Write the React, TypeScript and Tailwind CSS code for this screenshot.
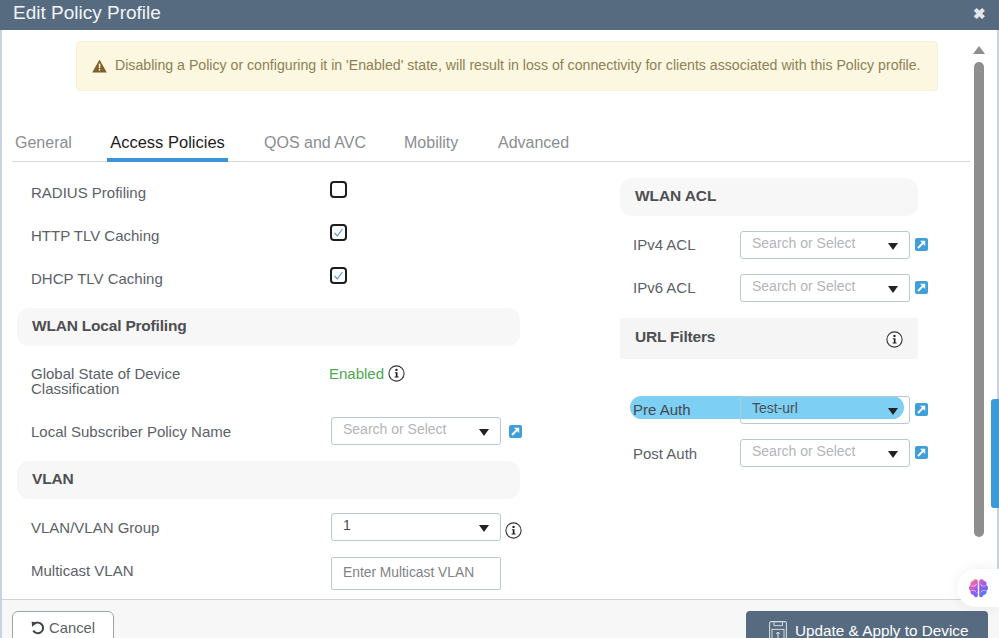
import React from "react";

const font = { fontFamily: '"Liberation Sans", Arial, sans-serif' };

function LinkIcon() {
  return (
    <svg width="13" height="13" viewBox="0 0 13 13" className="shrink-0">
      <rect width="13" height="13" rx="2" fill="#3f9fd8" />
      <path d="M3 10 L8.6 4.4" stroke="#fff" strokeWidth="2" />
      <path d="M5 2.8 H10.2 V8 Z" fill="#fff" />
    </svg>
  );
}

function InfoIcon() {
  return (
    <svg width="17" height="17" viewBox="0 0 17 17" className="shrink-0">
      <circle cx="8.5" cy="8.5" r="7.6" fill="#fff" stroke="#333" strokeWidth="1.1" />
      <circle cx="8.5" cy="4.9" r="1.2" fill="#222" />
      <path d="M6.9 7.2 H9.5 V11.6 H10.6 V12.6 H6.6 V11.6 H7.8 V8.2 H6.9 Z" fill="#222" />
    </svg>
  );
}

function Select({ value, clear }: { value?: string; clear?: boolean }) {
  return (
    <div
      className={`relative z-10 w-[170px] h-[28px] shrink-0 rounded-[3px] border border-[#b7c8d1] flex pl-[11px] pt-[1px] text-[14px] leading-[20px] ${
        clear ? "" : "bg-white"
      } ${value ? "text-[#4a4f54]" : "text-[#b3b5b7]"}`}
    >
      <span>{value ?? "Search or Select"}</span>
      <div className="ml-auto w-[31px] mr-[1px] flex justify-center pt-[10px]">
        <div className="w-0 h-0 border-l-[5px] border-r-[5px] border-t-[7px] border-l-transparent border-r-transparent border-t-[#222]" />
      </div>
    </div>
  );
}

function Check({ on }: { on?: boolean }) {
  return (
    <div className="w-[17px] h-[17px] rounded-[4px] border-2 border-[#1d1d1d] bg-white flex items-center justify-center">
      {on && (
        <svg width="11" height="11" viewBox="0 0 11 11">
          <path d="M1.5 6 L4.3 8.8 L9.5 2" fill="none" stroke="#4a9fd6" strokeWidth="1.2" />
        </svg>
      )}
    </div>
  );
}

function CheckRow({ label, on }: { label: string; on?: boolean }) {
  return (
    <div className="h-[43px] flex items-start pl-[14px] text-[15px] text-[#5b6167]">
      <span className="w-[299px] pt-[2px] leading-[20px]">{label}</span>
      <Check on={on} />
    </div>
  );
}

function Section({ title }: { title: string }) {
  return (
    <div className="h-[38px] rounded-[12px] bg-[#f7f7f7] pl-[15px] pb-[3px] flex items-center text-[15.5px] font-bold text-[#4d4f52] tracking-[-0.2px]">
      {title}
    </div>
  );
}

function BrainIcon() {
  return (
    <svg width="21" height="21" viewBox="0 0 21 21">
      <defs>
        <linearGradient id="brainGrad" x1="0" y1="0" x2="0.8" y2="1">
          <stop offset="0" stopColor="#f59a3c" />
          <stop offset="0.3" stopColor="#e05fc0" />
          <stop offset="0.6" stopColor="#8a5cf0" />
          <stop offset="1" stopColor="#4f7df0" />
        </linearGradient>
      </defs>
      <path
        d="M9.8 2.4 C8.6 .6 5.6 .9 5 3 C2.8 3 1.8 5.4 2.8 7 C.4 8.2 .4 11.6 2.6 12.8 C1.8 15 3.6 17 5.4 16.8 C6 19.6 9 20 9.8 18 Z M11.2 2.4 C12.4 .6 15.4 .9 16 3 C18.2 3 19.2 5.4 18.2 7 C20.6 8.2 20.6 11.6 18.4 12.8 C19.2 15 17.4 17 15.6 16.8 C15 19.6 12 20 11.2 18 Z"
        fill="url(#brainGrad)"
      />
      <path
        d="M3.5 8 H7 L8.4 6 M3.5 12.5 H6.6 L8.4 14.5 M17.5 8 H14 L12.6 6 M17.5 12.5 H14.4 L12.6 14.5"
        fill="none"
        stroke="#fff"
        strokeOpacity="0.7"
        strokeWidth="0.8"
      />
    </svg>
  );
}

export default function App() {
  return (
    <div style={font} className="relative w-[999px] h-[638px] overflow-hidden bg-white flex flex-col">
      <header className="h-[30px] shrink-0 bg-[#566b80] flex items-center justify-between pl-[13px] pr-[13px] pb-[4px] text-white">
        <span className="text-[19px] leading-[26px] text-[#f2f4f6]">Edit Policy Profile</span>
        <span className="text-[15px] font-bold text-[#e3e7ea] leading-none">✖</span>
      </header>

      <main className="h-[569px] shrink-0 flex border-l-2 border-r-2 border-[#c7d3df] overflow-hidden">
        <div className="w-[970px] shrink-0 flex flex-col">
          <div className="ml-[74px] mt-[11px] w-[862px] h-[50px] shrink-0 rounded-[4px] border border-[#f5f0d8] bg-[#fbf7e1] flex items-center pl-[15px] text-[14.15px] whitespace-nowrap text-[#8f7f55]">
            <svg width="15" height="14" viewBox="0 0 15 14" className="mr-[8px] shrink-0">
              <path d="M7.5 .5 L14.8 13.5 H.2 Z" fill="#7d6128" />
              <rect x="6.8" y="4.6" width="1.5" height="4.6" fill="#fbf7e1" />
              <rect x="6.8" y="10" width="1.5" height="1.6" fill="#fbf7e1" />
            </svg>
            Disabling a Policy or configuring it in 'Enabled' state, will result in loss of connectivity for clients associated with this Policy profile.
          </div>

          <nav className="ml-[10px] mt-[31px] h-[40px] shrink-0 w-[958px] border-b border-[#d5d8da] flex text-[16px] text-[#8a8e92] relative">
            <span className="ml-[3px] w-[92px] pt-[9px] leading-[24px]">General</span>
            <span className="w-[121px] h-[40px] pt-[8px] leading-[24px] text-center text-[16.5px] text-[#1c1c1c] border-b-[4px] border-[#3c94d6]">
              Access Policies
            </span>
            <span className="ml-[36px] w-[140px] pt-[9px] leading-[24px]">QOS and AVC</span>
            <span className="w-[94px] pt-[9px] leading-[24px]">Mobility</span>
            <span className="pt-[9px] leading-[24px]">Advanced</span>
          </nav>

          <div className="flex">
            <section className="ml-[15px] w-[503px] shrink-0 pt-[19px]">
              <CheckRow label="RADIUS Profiling" />
              <CheckRow label="HTTP TLV Caching" on />
              <CheckRow label="DHCP TLV Caching" on />
              <div className="-mt-[2px]">
                <Section title="WLAN Local Profiling" />
              </div>
              <div className="mt-[20px] flex pl-[14px] text-[15px] text-[#5b6167]">
                <span className="w-[298px] leading-[15px] pr-[100px]">Global State of Device Classification</span>
                <span className="text-[#4ca84f] leading-[15px]">Enabled</span>
                <span className="ml-[4px] -mt-[1px]">
                  <InfoIcon />
                </span>
              </div>
              <div className="mt-[21px] flex items-center pl-[14px] text-[15px] text-[#5b6167]">
                <span className="w-[300px] shrink-0 pt-[2px]">Local Subscriber Policy Name</span>
                <Select />
                <span className="ml-[8px]">
                  <LinkIcon />
                </span>
              </div>
              <div className="mt-[16px]">
                <Section title="VLAN" />
              </div>
              <div className="mt-[14px] flex items-center pl-[14px] text-[15px] text-[#5b6167]">
                <span className="w-[300px] shrink-0 pt-[2px]">VLAN/VLAN Group</span>
                <Select value="1" />
                <span className="ml-[4px] mt-[6px]">
                  <InfoIcon />
                </span>
              </div>
              <div className="mt-[16px] flex items-start pl-[14px] text-[15px] text-[#5b6167]">
                <span className="w-[300px] shrink-0 leading-[20px] pt-[4px]">Multicast VLAN</span>
                <div className="w-[170px] h-[33px] border border-[#b7c8d1] rounded-[2px] pl-[11px] flex items-center text-[13.8px] text-[#7f8387]">
                  Enter Multicast VLAN
                </div>
              </div>
            </section>

            <section className="ml-[100px] w-[310px] shrink-0 pt-[16px]">
              <div className="w-[298px] h-[38px] rounded-[12px] bg-[#f7f7f7] pl-[15px] pb-[3px] flex items-center text-[15.5px] font-bold text-[#4d4f52] tracking-[-0.1px]">
                WLAN ACL
              </div>
              <div className="mt-[15px] flex items-center text-[15px] text-[#5b6167]">
                <span className="w-[120px] pl-[13px]">IPv4 ACL</span>
                <Select />
                <span className="ml-[5px] -mt-[2px]">
                  <LinkIcon />
                </span>
              </div>
              <div className="mt-[15px] flex items-center text-[15px] text-[#5b6167]">
                <span className="w-[120px] pl-[13px]">IPv6 ACL</span>
                <Select />
                <span className="ml-[5px] -mt-[2px]">
                  <LinkIcon />
                </span>
              </div>
              <div className="mt-[16px] w-[298px] h-[41px] rounded-[3px] bg-[#f5f5f5] pl-[15px] pr-[15px] flex items-center justify-between text-[15.5px] font-bold text-[#4d4f52] tracking-[-0.2px]">
                <span className="-mt-[3px]">URL Filters</span>
                <span className="mt-[1px]">
                  <InfoIcon />
                </span>
              </div>
              <div className="relative mt-[37px] flex items-center text-[15px] text-[#43494e]">
                <div className="absolute left-[10px] top-0 w-[274px] h-[23px] rounded-full bg-[#7dcff3]" />
                <span className="relative z-10 w-[120px] pl-[13px]">Pre Auth</span>
                <Select value="Test-url" clear />
                <span className="ml-[5px] -mt-[2px]">
                  <LinkIcon />
                </span>
              </div>
              <div className="mt-[15px] flex items-center text-[15px] text-[#5b6167]">
                <span className="w-[120px] pl-[13px] pt-[2px]">Post Auth</span>
                <Select />
                <span className="ml-[5px] -mt-[2px]">
                  <LinkIcon />
                </span>
              </div>
            </section>
          </div>
        </div>

        <aside className="w-[14px] shrink-0 flex flex-col items-center pt-[16px]">
          <div className="w-0 h-0 border-l-[6px] border-r-[6px] border-b-[8px] border-l-transparent border-r-transparent border-b-[#8e8e8e]" />
          <div className="mt-[8px] w-[10px] h-[475px] rounded-full bg-[#8e8e8e]" />
        </aside>
      </main>

      <footer className="h-[39px] shrink-0 bg-[#f7f7f7] border-t border-[#cfd3d6] border-l-2 border-l-[#c7d3df] pl-[10px] pr-[11px] pt-[11px] flex justify-between">
        <button className="w-[102px] h-[40px] bg-white border border-[#9aa5ad] rounded-[6px] flex items-start pl-[18px] pt-[6px] text-[14.8px] text-[#5b6167] leading-[20px]">
          <svg width="14" height="14" viewBox="0 0 14 14" className="mt-[3px] mr-[4px] shrink-0">
            <path d="M3 3.2 A5.3 5.3 0 1 1 2.2 9.6" fill="none" stroke="#3f454a" strokeWidth="2" />
            <path d="M.6 .8 L5.6 1.3 L1.2 6 Z" fill="#3f454a" />
          </svg>
          Cancel
        </button>
        <button className="w-[242px] h-[40px] bg-[#566b80] rounded-[4px] flex items-start pl-[23px] pt-[10px] text-[15.3px] text-white leading-[20px]">
          <svg width="18" height="20" viewBox="0 0 18 20" className="mr-[8px] shrink-0">
            <rect x=".6" y=".6" width="16.8" height="19" rx="1.5" fill="none" stroke="#d3dade" strokeWidth="1.1" />
            <rect x="5" y=".6" width="8.5" height="4" fill="none" stroke="#d3dade" strokeWidth="1" />
            <rect x="3" y="8.4" width="12" height="11.2" fill="none" stroke="#d3dade" strokeWidth="1" />
            <path d="M9 17 V11.5 M7.2 13 L9 11 L10.8 13" fill="none" stroke="#e6eaec" strokeWidth="1" />
          </svg>
          Update &amp; Apply to Device
        </button>
      </footer>

      <div className="absolute right-0 top-[399px] w-[8px] h-[109px] rounded-l-[3px] bg-[#3a9bd9]" />
      <div className="absolute right-0 top-[569px] w-[42px] h-[38px] rounded-l-full bg-white shadow-[0_0_14px_rgba(0,0,0,0.07)] flex items-center pl-[11px]">
        <BrainIcon />
      </div>
    </div>
  );
}
